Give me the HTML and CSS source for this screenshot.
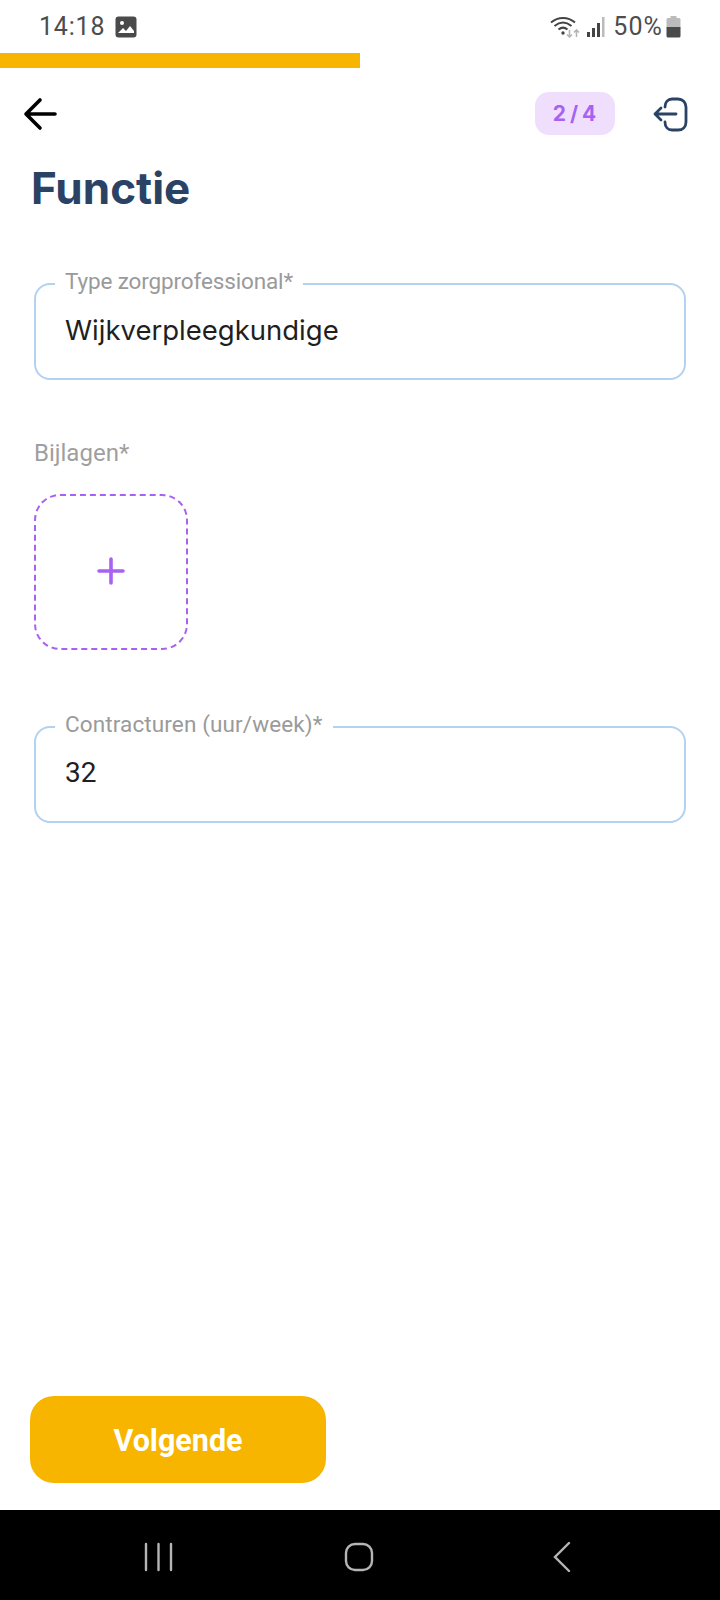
FILE: index.html
```html
<!DOCTYPE html>
<html lang="nl">
<head>
<meta charset="utf-8">
<title>Functie</title>
<link rel="stylesheet" href="styles.css">
</head>
<body>
<div class="screen">
  <div class="status">
    <div class="status-left">
      <span class="clock">14:18</span>
      <svg class="pic" width="22" height="22" viewBox="0 0 22 22"><rect width="21" height="21" x="0.5" y="0.5" rx="3" fill="#4a4a4a"/><circle cx="7" cy="7" r="2" fill="#fff"/><path d="M3 17l5-5 3 3 4-5 4 5v2H3z" fill="#fff"/></svg>
    </div>
    <div class="status-right">
      <svg class="wifi" width="30" height="22" viewBox="0 0 30 22" fill="none"><path d="M1 6.500C8 .5 18 .5 25 6.500" stroke="#444" stroke-width="2"/><path d="M4.500 10C10 5.500 16 5.500 21.500 10" stroke="#444" stroke-width="2"/><path d="M8.500 13.500C11.500 11 14.500 11 17.500 13.500" stroke="#444" stroke-width="2"/><circle cx="13" cy="17" r="1.700" fill="#444"/><path d="M19.500 14v7M17 18.500l2.500 2.500 2.500-2.500M26.500 21v-7M24 16.500l2.500-2.500 2.500 2.500" stroke="#b5b5b5" stroke-width="1.600"/></svg>
      <svg class="signal" width="19" height="20" viewBox="0 0 19 20"><rect x="0" y="15" width="3" height="5" fill="#444"/><rect x="5" y="11" width="3" height="9" fill="#444"/><rect x="10" y="6" width="3" height="14" fill="#444"/><rect x="15" y="0" width="2.500" height="20" fill="#bbb"/></svg>
      <span class="pct">50%</span>
      <svg class="batt" width="15" height="22" viewBox="0 0 15 22"><rect x="4.500" y="0" width="6" height="3" fill="#bbb"/><rect x="0.500" y="2" width="14" height="10" rx="1.500" fill="#bbb"/><path d="M.5 11h14v9a1.500 1.500 0 0 1-1.500 1.500H2A1.500 1.500 0 0 1 .5 20z" fill="#4a4a4a"/></svg>
    </div>
  </div>
  <div class="progress"><div class="progress-fill"></div></div>
  <header class="top">
    <svg class="back" width="34" height="34" viewBox="0 0 34 34" fill="none"><path d="M32 17H3M17 3L3 17l14 14" stroke="#000" stroke-width="3.600" stroke-linecap="round" stroke-linejoin="round"/></svg>
    <div class="top-right">
      <span class="badge">2 / 4</span>
      <svg class="exit" width="36" height="36" viewBox="0 0 36 36" fill="none"><path d="M13 11C13 6 16 3 20 3h6c4.500 0 8 3.500 8 8v15c0 5-3.500 8-8 8h-6c-4 0-7-3-7-8" stroke="#2a4365" stroke-width="2.800" stroke-linecap="round"/><path d="M24 18H3M9 12l-6 6 6 6" stroke="#2a4365" stroke-width="2.800" stroke-linecap="round" stroke-linejoin="round"/></svg>
    </div>
  </header>
  <main class="form">
    <h1 class="title">Functie</h1>
    <div class="field field-first">
      <span class="field-label field-label-type">Type zorgprofessional*</span>
      <span class="field-value">Wijkverpleegkundige</span>
    </div>
    <div class="attach">
      <div class="attach-label">Bijlagen*</div>
      <button class="attach-box" type="button">
        <svg width="28" height="28" viewBox="0 0 28 28" fill="none"><path d="M14 2v24M2 14h24" stroke="#a862f2" stroke-width="3.600" stroke-linecap="round"/></svg>
      </button>
    </div>
    <div class="field">
      <span class="field-label field-label-hours">Contracturen (uur/week)*</span>
      <span class="field-value field-num">32</span>
    </div>
  </main>
  <div class="actions"><button class="next" type="button">Volgende</button></div>
  <nav class="navbar">
    <svg width="30" height="30" viewBox="0 0 30 30" fill="none"><path d="M2 2v26M14.500 2v26M27 2v26" stroke="#b5b5b5" stroke-width="2.400" stroke-linecap="round"/></svg>
    <svg class="nav-home" width="30" height="30" viewBox="0 0 30 30" fill="none"><rect x="2" y="2" width="26" height="26" rx="9" stroke="#b5b5b5" stroke-width="2.400"/></svg>
    <svg width="30" height="30" viewBox="0 0 30 30" fill="none"><path d="M22 1L8 15l14 14" stroke="#b5b5b5" stroke-width="2.400" stroke-linecap="round"/></svg>
  </nav>
</div>
</body>
</html>
```
FILE: styles.css
```css
* { box-sizing: border-box; }
html, body { margin: 0; padding: 0; background: #fff; }
.screen {
  width: 720px; height: 1600px; display: flex; flex-direction: column;
  font-family: "Inter", "Liberation Sans", sans-serif; overflow: hidden;
}
.status {
  height: 53px; display: flex; justify-content: space-between; align-items: center;
  padding: 0 39px 0 39px;
}
.status-left, .status-right { display: flex; align-items: center; }
.clock, .pct { font-family: "Roboto", sans-serif; font-size: 25px; color: #4d4d4d; letter-spacing: 0.8px; }
.pic { margin-left: 10px; }
.signal { margin-left: 7px; }
.pct { margin-left: 7px; letter-spacing: 1.1px; }
.batt { margin-left: 3px; }
.progress { height: 15px; }
.progress-fill { width: 360px; height: 100%; background: #f7b500; }
.top {
  height: 90px; display: flex; justify-content: space-between; align-items: center;
  padding: 1px 32px 0 23px;
}
.top-right { display: flex; align-items: center; gap: 37px; }
.badge {
  width: 80px; height: 43px; border-radius: 14px; background: #efdffd; color: #a862f2;
  font-weight: 700; font-size: 21px; display: flex; align-items: center; justify-content: center;
  letter-spacing: 1px; word-spacing: -3px;
}
.form { flex: 1; padding: 0 34px; }
.title {
  margin: 2px 0 0 -3px; font-size: 44px; line-height: 56px; font-weight: 700; color: #2a4365;
}
.field {
  position: relative; width: 652px; height: 97px; border: 2px solid #b3d1f0; border-radius: 16px;
  padding: 28px 29px 0;
}
.field-first { margin-top: 67px; }
.field-label {
  position: absolute; left: 19px; top: -17px; background: #fff; padding: 0 10px;
  font-family: "Roboto", sans-serif; font-size: 22.5px; line-height: 26px; color: #9a9a9a;
}
.field-label-type { letter-spacing: -0.14px; }
.field-label-hours { letter-spacing: 0.12px; }
.field-value { font-size: 27.500px; line-height: 34px; color: #1f1f1f; display: block; }
.field-num { font-family: "Roboto", sans-serif; font-size: 28px; }
.attach { margin: 58px 0 76px; }
.attach-label { font-family: "Roboto", sans-serif; font-size: 24px; line-height: 30px; color: #9f9f9f; margin-bottom: 26px; }
.attach-box {
  width: 154px; height: 156px; border: 2px dashed #a862f2; border-radius: 26px; background: #fff;
  display: flex; align-items: center; justify-content: center; padding: 0 0 3px;
}
.actions { padding: 0 0 27px 30px; }
.next {
  width: 296px; height: 87px; border: 0; border-radius: 24px; background: #f7b500; color: #fff;
  font-family: "Roboto", sans-serif; font-weight: 700; font-size: 30.500px; padding: 2px 0 0;
}
.navbar {
  height: 90px; background: #000; display: flex; align-items: center; justify-content: space-between;
  padding: 3px 143px 0 144px;
}
.nav-home { margin-right: 4px; }
```
